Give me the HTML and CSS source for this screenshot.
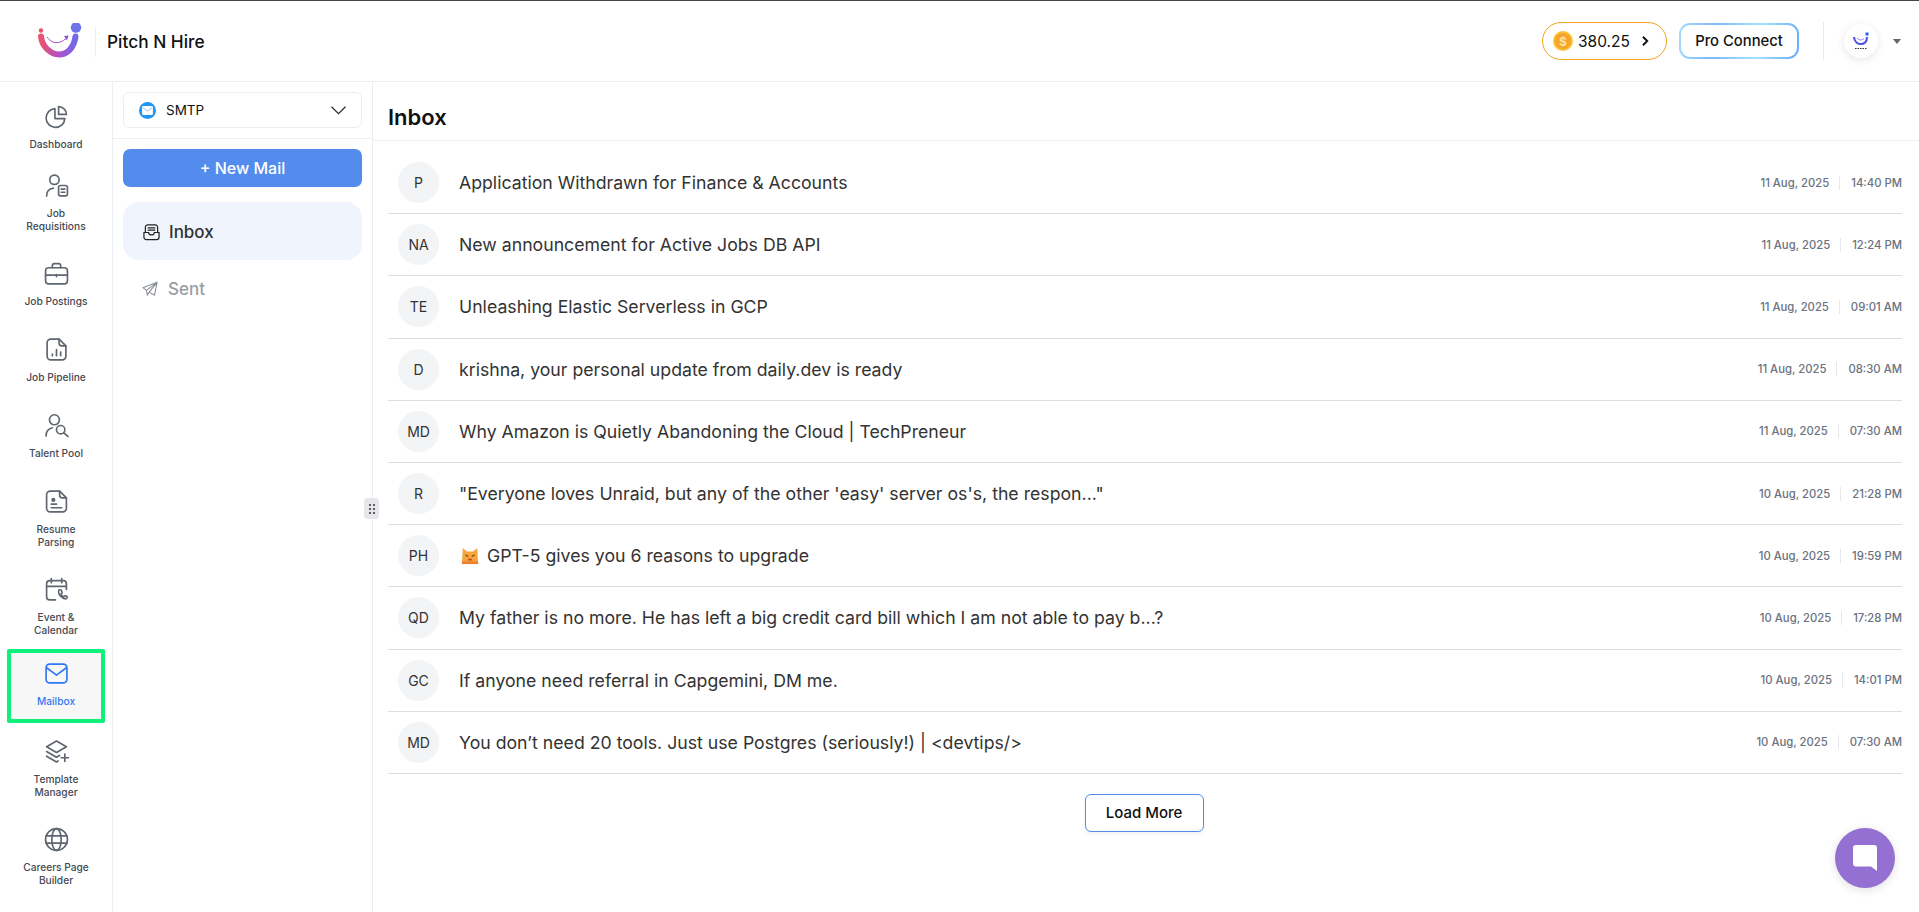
FILE: index.html
```html
<!DOCTYPE html>
<html lang="en">
<head>
<meta charset="utf-8">
<title>Pitch N Hire - Mailbox</title>
<link rel="stylesheet" href="styles.css">
</head>
<body>
<div class="app">
  <header class="topbar">
    <div class="brand">
      <svg class="logo" viewBox="0 0 46 36" width="46" height="36">
        <defs><linearGradient id="lg" x1="0" y1="0" x2="1" y2="0"><stop offset="0" stop-color="#e8556f"/><stop offset=".5" stop-color="#b44fc8"/><stop offset="1" stop-color="#6f6be8"/></linearGradient></defs>
        <circle cx="3" cy="7.500" r="2.200" fill="#e5566e"/>
        <circle cx="38" cy="4.500" r="5.200" fill="#6f74ea"/>
        <path d="M3 13.500C4 24 13 31.500 21 31.500C29 31.500 36 25 37.500 13.500" fill="none" stroke="url(#lg)" stroke-width="6" stroke-linecap="round"/>
        <path d="M9 14C14 21 21 21.500 28 15.500" fill="none" stroke="#a650c8" stroke-width="1"/>
        <path d="M26 13L30.500 12.500L29 17.500Z" fill="#8a55d0"/>
      </svg>
      <span class="brand-name">Pitch N Hire</span>
    </div>
    <div class="top-actions">
      <button class="coin-pill">
        <span class="coin">$</span><span>380.25</span>
        <svg viewBox="0 0 10 14" width="9" height="12"><path d="M2 2l5 5-5 5" fill="none" stroke="#111" stroke-width="2.200"/></svg>
      </button>
      <div class="pro-wrap"><button class="pro">Pro Connect</button></div>
      <span class="top-divider"></span>
      <span class="avatar-small">
        <svg viewBox="0 0 20 20" width="20" height="20"><path d="M3 6C3.500 11 7 13 10 13C13 13 16 11 16 6" fill="none" stroke="#4f52e0" stroke-width="2.200"/><rect x="14.500" y="1.500" width="3" height="3" fill="#2563eb"/><path d="M6 7c2 2.500 5 2.500 7 .5" fill="none" stroke="#4f52e0" stroke-width=".7"/><path d="M4 17.500h12" stroke="#333" stroke-width="1" stroke-dasharray="1.500 1"/></svg>
      </span>
      <span class="caret"></span>
    </div>
  </header>
  <div class="body-row">
    <nav class="sidebar">
      <a class="nav-item h-dash"><svg class="ico" viewBox="0 0 24 24"><path d="M10.500 4.500a9 9 0 1 0 9.500 9.500H10.500z"/><path d="M14 2.500a7.500 7.500 0 0 1 7.500 7.500H14z"/></svg><span>Dashboard</span></a>
      <a class="nav-item h-req"><svg class="ico" viewBox="0 0 24 24"><circle cx="10" cy="6.500" r="4.500"/><path d="M2.500 22c0-4 2.500-7 6.500-7.500"/><rect x="14" y="12" width="8.500" height="10" rx="1.800"/><path d="M16.500 15.500h3.500M16.500 18.500h3.500"/></svg><span>Job<br>Requisitions</span></a>
      <a class="nav-item h-post"><svg class="ico" viewBox="0 0 24 24"><rect x="1.500" y="6.500" width="21" height="15.500" rx="3"/><path d="M8 6.500V4.500a2 2 0 0 1 2-2h4a2 2 0 0 1 2 2v2M1.500 13.500h21M12 13v2"/></svg><span>Job Postings</span></a>
      <a class="nav-item h-pipe"><svg class="ico" viewBox="0 0 24 24"><path d="M14.500 2H6.500a3.500 3.500 0 0 0-3.500 3.500v13A3.500 3.500 0 0 0 6.500 22h11a3.500 3.500 0 0 0 3.500-3.500V8.500z"/><path d="M14.500 2v4a2.500 2.500 0 0 0 2.500 2.500h4M8 18v-1.500M12 18v-6M16 18v-3.500"/></svg><span>Job Pipeline</span></a>
      <a class="nav-item h-tal"><svg class="ico" viewBox="0 0 24 24"><circle cx="10" cy="6.500" r="4.800"/><path d="M2 22c0-4 2.500-7 6-7.800"/><circle cx="16" cy="16" r="4"/><path d="M19 19l4 3.500"/></svg><span>Talent Pool</span></a>
      <a class="nav-item h-res"><svg class="ico" viewBox="0 0 24 24"><path d="M15 2H6a3.500 3.500 0 0 0-3.500 3.500v13A3.500 3.500 0 0 0 6 22h12a3.500 3.500 0 0 0 3.500-3.500V8.500z"/><path d="M15 2v4a2.500 2.500 0 0 0 2.500 2.500h4M7 14.500h5M7 18h10"/><circle cx="9" cy="10.500" r="1.200" fill="#5f6670"/></svg><span>Resume<br>Parsing</span></a>
      <a class="nav-item h-evt"><svg class="ico" viewBox="0 0 24 24"><path d="M11 22H5.500A3 3 0 0 1 2.500 19V6.500a3 3 0 0 1 3-3h13a3 3 0 0 1 3 3V12M2.500 9h19M7 1.500v4M17 1.500v4"/><path d="M14 13c-.5 4 2.500 7.500 7 8 1.500-.5 1.500-2 1-2.500l-2-.5-1 1c-1.500-.5-2.500-2-2.500-3l1-1-1-2.500c-1-.5-2.500-.5-2.500.5z" stroke-width="1.500"/></svg><span>Event &amp;<br>Calendar</span></a>
      <a class="nav-item active"><svg class="ico" viewBox="0 0 24 24"><rect x="2" y="3" width="20" height="18" rx="3.500"/><path d="M2.500 6.500L12 13.500L21.500 6.500"/></svg><span>Mailbox</span></a>
      <a class="nav-item h-tpl"><svg class="ico" viewBox="0 0 24 24"><path d="M12 2l9.500 5.500L12 13 2.500 7.500z"/><path d="M2.500 12l9.500 5.500 3-1.800M2.500 16.500L12 22l1.500-.9M20 14.500v7M16.500 18H23.500"/></svg><span>Template<br>Manager</span></a>
      <a class="nav-item h-car"><svg class="ico" viewBox="0 0 24 24"><circle cx="12" cy="12" r="10.500"/><ellipse cx="12" cy="12" rx="4.500" ry="10.500"/><path d="M2 8.500h20M2 15.500h20"/></svg><span>Careers Page<br>Builder</span></a>
    </nav>
    <aside class="panel">
      <div class="select-wrap">
        <div class="select">
          <span class="smtp-ico"><svg viewBox="0 0 12 10" width="11" height="9"><rect width="12" height="10" rx="1.500" fill="#fff"/><path d="M1 2l5 3.500L11 2" fill="none" stroke="#7cc0f7" stroke-width="1"/></svg></span>
          <span class="select-label">SMTP</span>
          <svg class="chev" viewBox="0 0 14 8" width="15" height="9"><path d="M.5.500L7 7 13.500.500" fill="none" stroke="#222" stroke-width="1"/></svg>
        </div>
      </div>
      <div class="panel-body">
        <button class="new-mail">+ New Mail</button>
        <a class="folder current">
          <svg viewBox="0 0 18 18" width="17" height="17"><path d="M1 9V14a2.500 2.500 0 0 0 2.500 2.500h11A2.500 2.500 0 0 0 17 14V9h-5c0 3.500-6 3.500-6 0zM2.500 9V3.500A2.500 2.500 0 0 1 5 1h8a2.500 2.500 0 0 1 2.500 2.500V9M5 4h8M5 6.500h8" fill="none" stroke="#222" stroke-width="1.300"/></svg>
          <span>Inbox</span>
        </a>
        <a class="folder muted">
          <svg viewBox="0 0 18 18" width="16" height="16"><path d="M1 7.500L17 1.500 14 16 8 12.500 6 16 5 10.500zM5 10.500L17 1.500 8 12.500" fill="none" stroke="#8a8f96" stroke-width="1.200" stroke-linejoin="round"/></svg>
          <span>Sent</span>
        </a>
      </div>
      <span class="handle"><i></i><i></i><i></i><i></i><i></i><i></i></span>
    </aside>
    <main class="main">
      <h1 class="title">Inbox</h1>
      <ul class="list">
        <li class="row"><span class="initials">P</span><span class="subject">Application Withdrawn for Finance &amp; Accounts</span><span class="date">11 Aug, 2025</span><span class="time">14:40 PM</span></li>
        <li class="row"><span class="initials">NA</span><span class="subject">New announcement for Active Jobs DB API</span><span class="date">11 Aug, 2025</span><span class="time">12:24 PM</span></li>
        <li class="row"><span class="initials">TE</span><span class="subject">Unleashing Elastic Serverless in GCP</span><span class="date">11 Aug, 2025</span><span class="time">09:01 AM</span></li>
        <li class="row"><span class="initials">D</span><span class="subject">krishna, your personal update from daily.dev is ready</span><span class="date">11 Aug, 2025</span><span class="time">08:30 AM</span></li>
        <li class="row"><span class="initials">MD</span><span class="subject">Why Amazon is Quietly Abandoning the Cloud | TechPreneur</span><span class="date">11 Aug, 2025</span><span class="time">07:30 AM</span></li>
        <li class="row"><span class="initials">R</span><span class="subject">"Everyone loves Unraid, but any of the other 'easy' server os's, the respon..."</span><span class="date">10 Aug, 2025</span><span class="time">21:28 PM</span></li>
        <li class="row"><span class="initials">PH</span><span class="subject"><svg class="cat" viewBox="0 0 20 20" width="18" height="18"><path d="M2 1l4.500 4h7L18 1l1 18H1z" fill="#f6a53c"/><path d="M1 19h18v-3H1z" fill="#ef7f2e"/><path d="M5 9l3 1.500M15 9l-3 1.500" stroke="#7a3b12" stroke-width="1.200"/><path d="M8 14h4" stroke="#c0392b" stroke-width="1.800"/></svg>GPT-5 gives you 6 reasons to upgrade</span><span class="date">10 Aug, 2025</span><span class="time">19:59 PM</span></li>
        <li class="row"><span class="initials">QD</span><span class="subject">My father is no more. He has left a big credit card bill which I am not able to pay b...?</span><span class="date">10 Aug, 2025</span><span class="time">17:28 PM</span></li>
        <li class="row"><span class="initials">GC</span><span class="subject">If anyone need referral in Capgemini, DM me.</span><span class="date">10 Aug, 2025</span><span class="time">14:01 PM</span></li>
        <li class="row"><span class="initials">MD</span><span class="subject">You don’t need 20 tools. Just use Postgres (seriously!) | &lt;devtips/&gt;</span><span class="date">10 Aug, 2025</span><span class="time">07:30 AM</span></li>
      </ul>
      <div class="more"><button class="load-more">Load More</button></div>
    </main>
  </div>
  <button class="chat"><svg viewBox="0 0 26 28" width="26" height="28"><path d="M4 1h18a3 3 0 0 1 3 3v23l-6-4.500H4a3 3 0 0 1-3-3V4a3 3 0 0 1 3-3z" fill="#fff"/></svg></button>
</div>
</body>
</html>
```
FILE: styles.css
```css
* { box-sizing: border-box; }
html, body { margin: 0; height: 100%; overflow: hidden; }
body { font-family: Inter, "Liberation Sans", sans-serif; background: #fff; color: #222; }
button { font-family: inherit; cursor: pointer; }
.app { height: 912px; border-top: 1px solid #444; display: flex; flex-direction: column; position: relative; }

.topbar { height: 81px; flex: none; display: flex; justify-content: space-between; align-items: center; border-bottom: 1px solid #eceef1; padding: 0 18px 0 38px; }
.brand { display: flex; align-items: center; }
.brand-name { font-size: 17.300px; font-weight: 500; color: #111; border-left: 1px solid #eceef1; padding: 6px 0 6px 11px; margin-left: 11px; line-height: 18px; position: relative; top: 1px; }
.top-actions { display: flex; align-items: center; }
.coin-pill { width: 125px; height: 38px; border: 1px solid #f2a31c; border-radius: 19px; background: #fff; display: flex; align-items: center; padding: 0 0 0 10px; font-size: 15.500px; color: #111; margin-right: 12px; }
.coin-pill svg { margin-left: 11px; }
.coin { width: 20px; height: 20px; border-radius: 50%; background: radial-gradient(circle, #f5a62a 55%, #fcc534 60%, #f6a821 100%); color: #ffdf99; font-size: 12px; font-weight: 700; display: flex; align-items: center; justify-content: center; margin-right: 5px; }
.pro-wrap { width: 120px; height: 36px; padding: 2px; border-radius: 11px; background: linear-gradient(100deg, #a6dcfb 0%, #7fb8fa 30%, #a5e4fc 65%, #68aaf9 100%); margin-right: 24px; }
.pro { width: 100%; height: 100%; border: 0; border-radius: 9px; background: #fff; font-size: 14.800px; font-weight: 500; color: #111; padding: 0; }
.top-divider { width: 1px; height: 38px; background: #e8eaed; margin-right: 20px; }
.avatar-small { width: 34px; height: 34px; border-radius: 50%; background: #fff; box-shadow: 0 2px 8px rgba(0,0,0,.1); display: flex; align-items: center; justify-content: center; margin-right: 15px; }
.caret { width: 0; height: 0; border: 4px solid transparent; border-top: 5px solid #666; border-bottom: 0; }

.body-row { flex: 1; min-height: 0; display: flex; }

.sidebar { width: 113px; flex: none; border-right: 1px solid #eceef4; display: flex; flex-direction: column; align-items: center; padding: 22px 6px 0 6px; }
.nav-item { width: 98px; flex: none; display: flex; flex-direction: column; align-items: center; text-align: center; font-size: 10.200px; font-weight: 500; line-height: 13px; color: #444a54; }
.nav-item span { display: block; }
.ico { width: 25px; height: 25px; flex: none; fill: none; stroke: #5f6670; stroke-width: 1.600; stroke-linecap: round; stroke-linejoin: round; margin-bottom: 9px; }
.h-dash { height: 69px; }
.h-req { height: 88px; }
.h-post { height: 76px; }
.h-pipe { height: 76px; }
.h-tal { height: 76px; }
.h-res { height: 88px; }
.h-evt { height: 71px; }
.active { height: 74px; margin: 1px 0 2px; padding-top: 12px; background: #f7f7f8; outline: 4px solid #0ff07a; outline-offset: -4px; border-radius: 2px; color: #2f78f2; }
.active .ico { stroke: #2f78f2; }
.h-tpl { height: 88px; padding-top: 14px; }
.h-car { height: 60px; padding-top: 14px; }

.panel { width: 260px; flex: none; border-right: 1px solid #eceef4; position: relative; display: flex; flex-direction: column; }
.select-wrap { height: 57px; flex: none; border-bottom: 1px solid #eceef4; padding: 10px 10px 0; }
.select { height: 36px; width: 239px; border: 1px solid #eceef1; border-radius: 6px; display: flex; align-items: center; padding: 0 15px 0 15px; }
.smtp-ico { width: 17px; height: 17px; border-radius: 50%; background: #2196f3; display: flex; align-items: center; justify-content: center; flex: none; }
.select-label { flex: 1; font-size: 13.500px; margin-left: 10px; color: #111; }
.panel-body { padding: 10px 10px 0; display: flex; flex-direction: column; }
.new-mail { height: 38px; width: 239px; border: 0; border-radius: 7px; background: #548cee; color: #fff; font-size: 16px; font-weight: 500; padding: 0; }
.folder { width: 239px; display: flex; align-items: center; font-size: 17px; font-weight: 500; }
.current { height: 58px; margin-top: 15px; background: #f0f4fd; border-radius: 16px; padding: 2px 0 0 20px; gap: 9px; color: #333; }
.muted { height: 56px; margin-top: 0; padding: 2px 0 0 19px; gap: 10px; color: #9a9ea4; }
.handle { position: absolute; right: -7px; top: 416px; width: 15px; height: 21px; background: #e6e7ea; border-radius: 4px; display: grid; grid-template-columns: 2px 2px; grid-auto-rows: 2px; gap: 2px; align-content: center; justify-content: center; z-index: 2; }
.handle i { background: #333; border-radius: 50%; }

.main { flex: 1; min-width: 0; padding: 0 17px 0 15px; }
.title { margin: 0 -17px 0 -15px; height: 59px; border-bottom: 1px solid #eceef1; font-size: 22px; font-weight: 600; color: #111; padding: 21px 0 0 15px; line-height: 29px; }
.list { list-style: none; margin: 11px 0 0; padding: 0; }
.row { height: 62.200px; border-bottom: 1px solid #dcdde0; display: flex; align-items: center; }
.initials { width: 41px; height: 41px; margin-left: 10px; border-radius: 50%; background: #f3f4f6; display: flex; align-items: center; justify-content: center; font-size: 14px; flex: none; color: #333; }
.subject { flex: 1; margin-left: 20px; font-size: 17.700px; color: #333; white-space: nowrap; display: flex; align-items: center; }
.cat { margin: 0 8px 0 2px; }
.date { font-size: 11.300px; font-weight: 500; color: #6b7280; padding-right: 10px; border-right: 1px solid #e5e7eb; line-height: 14px; }
.time { font-size: 11.300px; font-weight: 500; color: #6b7280; padding-left: 11px; line-height: 14px; }
.more { display: flex; justify-content: center; padding: 20px 2px 0 0; }
.load-more { width: 119px; height: 38px; border: 1px solid #548cee; border-radius: 6px; background: #fff; font-size: 15px; font-weight: 500; color: #111; padding: 0; box-shadow: 0 2px 4px rgba(0,0,0,.06); }
.chat { position: absolute; right: 24px; top: 827px; width: 60px; height: 60px; border: 0; border-radius: 50%; background: #9370d1; display: flex; align-items: center; justify-content: center; padding: 0; box-shadow: 0 2px 10px rgba(0,0,0,.12); }
```
